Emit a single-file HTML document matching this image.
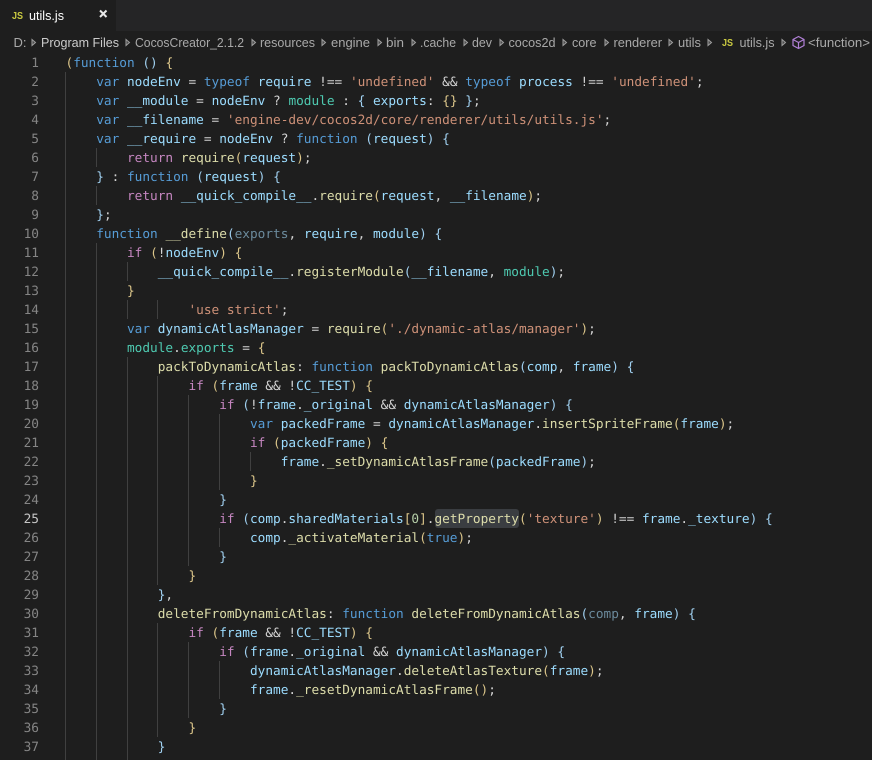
<!DOCTYPE html>
<html><head><meta charset="utf-8"><title>utils.js</title>
<style>
html,body{margin:0;padding:0;width:872px;height:760px;overflow:hidden;background:#1e1e1e}
body{position:relative}
svg.ui{position:absolute;left:0;top:0;font-family:"Liberation Sans",sans-serif;font-size:13px}
#nums{position:absolute;left:0;top:54px;width:39px;height:706px;overflow:hidden;text-align:right;font:12.79px/19px "DejaVu Sans Mono",monospace;color:#858585;text-rendering:geometricPrecision}
#nums div{height:19px}
#code{position:absolute;left:65.5px;top:54px;width:806px;height:706px;overflow:hidden;font:12.77px/19px "DejaVu Sans Mono",monospace;color:#d4d4d4;text-rendering:geometricPrecision}
#code div{height:19px;white-space:pre}
.k{color:#569cd6}.c{color:#c586c0}.v{color:#9cdcfe}.f{color:#dcdcaa}.s{color:#ce9178}.t{color:#4ec9b0}.d{color:#6b8a9c}.n{color:#b5cea8}
.y{color:#dcc68a}.b{color:#a0d0f0}
</style></head><body>
<svg class="ui" width="872" height="760" viewBox="0 0 872 760">
<rect x="0" y="0" width="872" height="31" fill="#252526"/>
<rect x="0" y="0" width="116" height="31" fill="#1e1e1e"/>
<rect x="435" y="509" width="84" height="19" rx="3" fill="#3a3d41"/>
<text x="12" y="19" font-size="10" font-weight="bold" fill="#cbcb41" textLength="11" lengthAdjust="spacingAndGlyphs">JS</text>
<text x="29" y="20" fill="#ffffff" textLength="35" lengthAdjust="spacingAndGlyphs">utils.js</text>
<path d="M100 10.5L106.500 17M106.500 10.500L100 17" stroke="#e8e8e8" stroke-width="2" fill="none"/>
<g fill="#a9a9a9">
<text x="13.500" y="47" textLength="13" lengthAdjust="spacingAndGlyphs">D:</text>
<text x="41" y="47" fill="#cccccc" textLength="78" lengthAdjust="spacingAndGlyphs">Program Files</text>
<text x="135" y="47" textLength="109" lengthAdjust="spacingAndGlyphs">CocosCreator_2.1.2</text>
<text x="260" y="47" textLength="55" lengthAdjust="spacingAndGlyphs">resources</text>
<text x="331" y="47" textLength="39" lengthAdjust="spacingAndGlyphs">engine</text>
<text x="386" y="47" textLength="18" lengthAdjust="spacingAndGlyphs">bin</text>
<text x="420" y="47" textLength="36" lengthAdjust="spacingAndGlyphs">.cache</text>
<text x="472" y="47" textLength="20" lengthAdjust="spacingAndGlyphs">dev</text>
<text x="508.500" y="47" textLength="47" lengthAdjust="spacingAndGlyphs">cocos2d</text>
<text x="572" y="47" textLength="24.500" lengthAdjust="spacingAndGlyphs">core</text>
<text x="613.500" y="47" textLength="48.500" lengthAdjust="spacingAndGlyphs">renderer</text>
<text x="678" y="47" textLength="23" lengthAdjust="spacingAndGlyphs">utils</text>
<text x="739.500" y="47" textLength="35" lengthAdjust="spacingAndGlyphs">utils.js</text>
<text x="808" y="47" textLength="62" lengthAdjust="spacingAndGlyphs">&lt;function&gt;</text>
</g>
<text x="722" y="46" font-size="10" font-weight="bold" fill="#cbcb41" textLength="11" lengthAdjust="spacingAndGlyphs">JS</text>
<g fill="#4a4a4a" stroke="#a0a0a0" stroke-width="1">
<path d="M32 39.500L35.500 42.500L32 45.500Z"/><path d="M126 39.500L129.500 42.500L126 45.500Z"/>
<path d="M252 39.500L255.500 42.500L252 45.500Z"/><path d="M322 39.500L325.500 42.500L322 45.500Z"/>
<path d="M378 39.500L381.500 42.500L378 45.500Z"/><path d="M412 39.500L415.500 42.500L412 45.500Z"/>
<path d="M464 39.500L467.500 42.500L464 45.500Z"/><path d="M500 39.500L503.500 42.500L500 45.500Z"/>
<path d="M563 39.500L566.500 42.500L563 45.500Z"/><path d="M605 39.500L608.500 42.500L605 45.500Z"/>
<path d="M669 39.500L672.500 42.500L669 45.500Z"/><path d="M708 39.500L711.500 42.500L708 45.500Z"/>
<path d="M782 39.500L785.500 42.500L782 45.500Z"/>
</g>
<path d="M798.500 36.500L804 39.500V45.500L798.500 48.500L793 45.500V39.500ZM793 39.500L798.500 42.500L804 39.500M798.500 42.500V48.500" fill="none" stroke="#b180d7" stroke-width="1.200"/>
<g fill="#404040">
<rect x="65" y="72" width="1" height="688"/>
<rect x="96" y="148" width="1" height="19"/><rect x="96" y="186" width="1" height="19"/><rect x="96" y="243" width="1" height="517"/>
<rect x="127" y="262" width="1" height="19"/><rect x="127" y="300" width="1" height="19"/><rect x="127" y="357" width="1" height="403"/>
<rect x="157" y="300" width="1" height="19"/><rect x="157" y="376" width="1" height="209"/><rect x="157" y="623" width="1" height="114"/>
<rect x="188" y="395" width="1" height="171"/><rect x="188" y="642" width="1" height="76"/>
<rect x="219" y="414" width="1" height="76"/><rect x="219" y="528" width="1" height="19"/><rect x="219" y="661" width="1" height="38"/>
<rect x="250" y="452" width="1" height="19"/>
</g>
</svg>
<div id="nums"><div>1</div><div>2</div><div>3</div><div>4</div><div>5</div><div>6</div><div>7</div><div>8</div><div>9</div><div>10</div><div>11</div><div>12</div><div>13</div><div>14</div><div>15</div><div>16</div><div>17</div><div>18</div><div>19</div><div>20</div><div>21</div><div>22</div><div>23</div><div>24</div><div style="color:#c6c6c6">25</div><div>26</div><div>27</div><div>28</div><div>29</div><div>30</div><div>31</div><div>32</div><div>33</div><div>34</div><div>35</div><div>36</div><div>37</div></div>
<div id="code">
<div><span class="y">(</span><span class="k">function</span> <span class="b">()</span> <span class="y">{</span></div>
<div>    <span class="k">var</span> <span class="v">nodeEnv</span> = <span class="k">typeof</span> <span class="v">require</span> !== <span class="s">'undefined'</span> &amp;&amp; <span class="k">typeof</span> <span class="v">process</span> !== <span class="s">'undefined'</span>;</div>
<div>    <span class="k">var</span> <span class="v">__module</span> = <span class="v">nodeEnv</span> ? <span class="t">module</span> : <span class="b">{</span> <span class="v">exports</span>: <span class="y">{}</span> <span class="b">}</span>;</div>
<div>    <span class="k">var</span> <span class="v">__filename</span> = <span class="s">'engine-dev/cocos2d/core/renderer/utils/utils.js'</span>;</div>
<div>    <span class="k">var</span> <span class="v">__require</span> = <span class="v">nodeEnv</span> ? <span class="k">function</span> <span class="b">(</span><span class="v">request</span><span class="b">)</span> <span class="b">{</span></div>
<div>        <span class="c">return</span> <span class="f">require</span><span class="y">(</span><span class="v">request</span><span class="y">)</span>;</div>
<div>    <span class="b">}</span> : <span class="k">function</span> <span class="b">(</span><span class="v">request</span><span class="b">)</span> <span class="b">{</span></div>
<div>        <span class="c">return</span> <span class="v">__quick_compile__</span>.<span class="f">require</span><span class="y">(</span><span class="v">request</span>, <span class="v">__filename</span><span class="y">)</span>;</div>
<div>    <span class="b">}</span>;</div>
<div>    <span class="k">function</span> <span class="f">__define</span><span class="b">(</span><span class="d">exports</span>, <span class="v">require</span>, <span class="v">module</span><span class="b">)</span> <span class="b">{</span></div>
<div>        <span class="c">if</span> <span class="y">(</span>!<span class="v">nodeEnv</span><span class="y">)</span> <span class="y">{</span></div>
<div>            <span class="v">__quick_compile__</span>.<span class="f">registerModule</span><span class="b">(</span><span class="v">__filename</span>, <span class="t">module</span><span class="b">)</span>;</div>
<div>        <span class="y">}</span></div>
<div>                <span class="s">'use strict'</span>;</div>
<div>        <span class="k">var</span> <span class="v">dynamicAtlasManager</span> = <span class="f">require</span><span class="y">(</span><span class="s">'./dynamic-atlas/manager'</span><span class="y">)</span>;</div>
<div>        <span class="t">module</span>.<span class="t">exports</span> = <span class="y">{</span></div>
<div>            <span class="f">packToDynamicAtlas</span>: <span class="k">function</span> <span class="f">packToDynamicAtlas</span><span class="b">(</span><span class="v">comp</span>, <span class="v">frame</span><span class="b">)</span> <span class="b">{</span></div>
<div>                <span class="c">if</span> <span class="y">(</span><span class="v">frame</span> &amp;&amp; !<span class="v">CC_TEST</span><span class="y">)</span> <span class="y">{</span></div>
<div>                    <span class="c">if</span> <span class="b">(</span>!<span class="v">frame</span>.<span class="v">_original</span> &amp;&amp; <span class="v">dynamicAtlasManager</span><span class="b">)</span> <span class="b">{</span></div>
<div>                        <span class="k">var</span> <span class="v">packedFrame</span> = <span class="v">dynamicAtlasManager</span>.<span class="f">insertSpriteFrame</span><span class="y">(</span><span class="v">frame</span><span class="y">)</span>;</div>
<div>                        <span class="c">if</span> <span class="y">(</span><span class="v">packedFrame</span><span class="y">)</span> <span class="y">{</span></div>
<div>                            <span class="v">frame</span>.<span class="f">_setDynamicAtlasFrame</span><span class="b">(</span><span class="v">packedFrame</span><span class="b">)</span>;</div>
<div>                        <span class="y">}</span></div>
<div>                    <span class="b">}</span></div>
<div>                    <span class="c">if</span> <span class="b">(</span><span class="v">comp</span>.<span class="v">sharedMaterials</span><span class="y">[</span><span class="n">0</span><span class="y">]</span>.<span class="f">getProperty</span><span class="y">(</span><span class="s">'texture'</span><span class="y">)</span> !== <span class="v">frame</span>.<span class="v">_texture</span><span class="b">)</span> <span class="b">{</span></div>
<div>                        <span class="v">comp</span>.<span class="f">_activateMaterial</span><span class="y">(</span><span class="k">true</span><span class="y">)</span>;</div>
<div>                    <span class="b">}</span></div>
<div>                <span class="y">}</span></div>
<div>            <span class="b">}</span>,</div>
<div>            <span class="f">deleteFromDynamicAtlas</span>: <span class="k">function</span> <span class="f">deleteFromDynamicAtlas</span><span class="b">(</span><span class="d">comp</span>, <span class="v">frame</span><span class="b">)</span> <span class="b">{</span></div>
<div>                <span class="c">if</span> <span class="y">(</span><span class="v">frame</span> &amp;&amp; !<span class="v">CC_TEST</span><span class="y">)</span> <span class="y">{</span></div>
<div>                    <span class="c">if</span> <span class="b">(</span><span class="v">frame</span>.<span class="v">_original</span> &amp;&amp; <span class="v">dynamicAtlasManager</span><span class="b">)</span> <span class="b">{</span></div>
<div>                        <span class="v">dynamicAtlasManager</span>.<span class="f">deleteAtlasTexture</span><span class="y">(</span><span class="v">frame</span><span class="y">)</span>;</div>
<div>                        <span class="v">frame</span>.<span class="f">_resetDynamicAtlasFrame</span><span class="y">()</span>;</div>
<div>                    <span class="b">}</span></div>
<div>                <span class="y">}</span></div>
<div>            <span class="b">}</span></div>
</div>
</body></html>
